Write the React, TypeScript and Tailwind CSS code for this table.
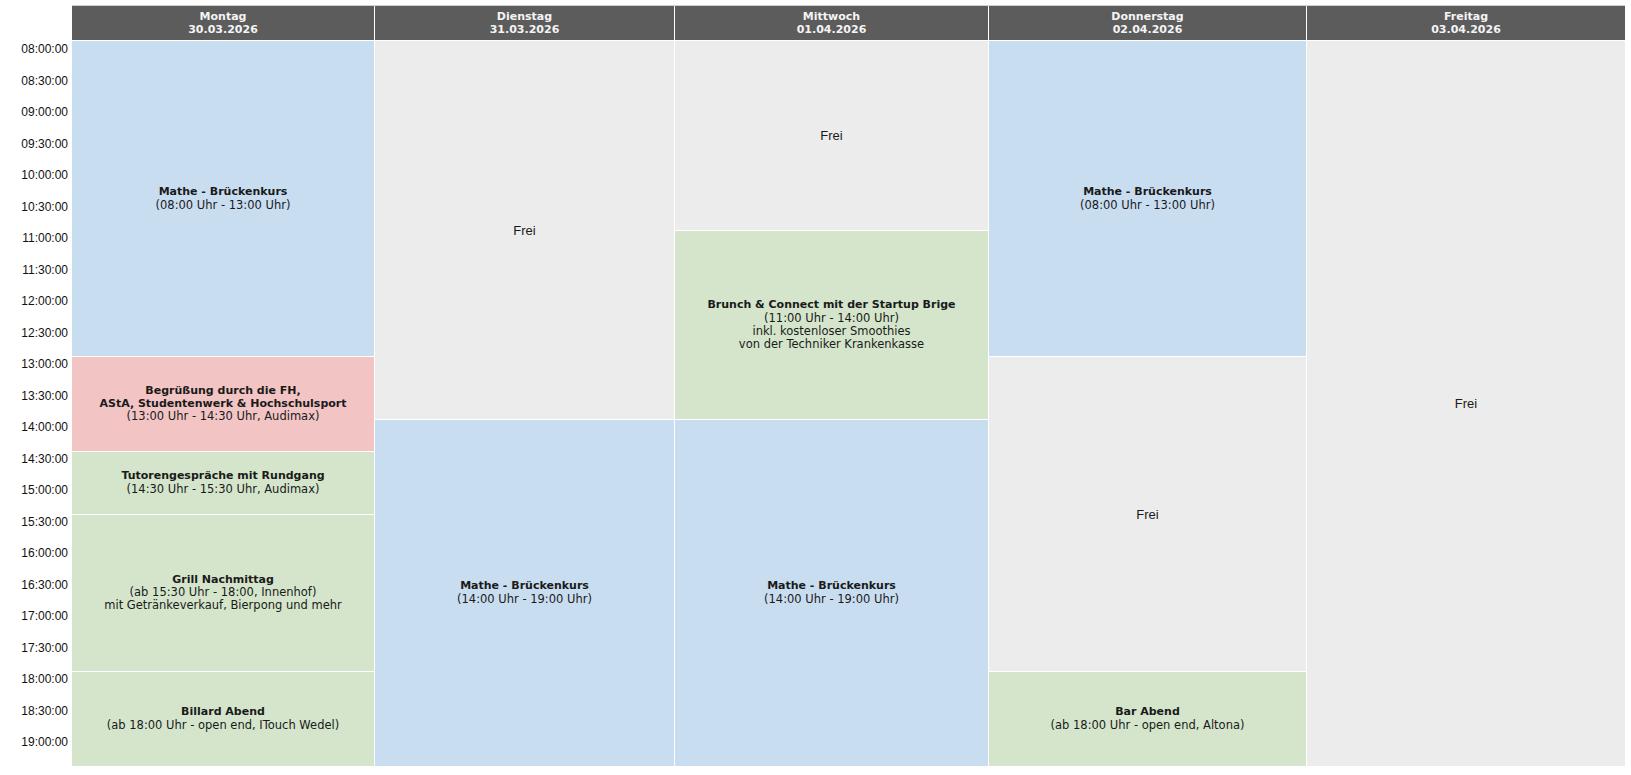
import React from "react";

type Ev = {
  h: string;
  bg: string;
  title?: string[];
  lines?: string[];
  frei?: boolean;
};

type Day = { name: string; date: string; w: string; events: Ev[] };

const BLUE = "bg-[#c9ddf1]";
const GRAY = "bg-[#ececec]";
const PINK = "bg-[#f2c4c4]";
const GREEN = "bg-[#d4e5cb]";

const days: Day[] = [
  {
    name: "Montag",
    date: "30.03.2026",
    w: "w-[302px]",
    events: [
      { h: "h-[315px]", bg: BLUE, title: ["Mathe - Brückenkurs"], lines: ["(08:00 Uhr - 13:00 Uhr)"] },
      {
        h: "h-[94.5px]",
        bg: PINK,
        title: ["Begrüßung durch die FH,", "AStA, Studentenwerk & Hochschulsport"],
        lines: ["(13:00 Uhr - 14:30 Uhr, Audimax)"],
      },
      { h: "h-[63px]", bg: GREEN, title: ["Tutorengespräche mit Rundgang"], lines: ["(14:30 Uhr - 15:30 Uhr, Audimax)"] },
      {
        h: "h-[157.5px]",
        bg: GREEN,
        title: ["Grill Nachmittag"],
        lines: ["(ab 15:30 Uhr - 18:00, Innenhof)", "mit Getränkeverkauf, Bierpong und mehr"],
      },
      { h: "h-[94.5px]", bg: GREEN, title: ["Billard Abend"], lines: ["(ab 18:00 Uhr - open end, ITouch Wedel)"] },
    ],
  },
  {
    name: "Dienstag",
    date: "31.03.2026",
    w: "w-[299px]",
    events: [
      { h: "h-[378px]", bg: GRAY, frei: true },
      { h: "h-[346.5px]", bg: BLUE, title: ["Mathe - Brückenkurs"], lines: ["(14:00 Uhr - 19:00 Uhr)"] },
    ],
  },
  {
    name: "Mittwoch",
    date: "01.04.2026",
    w: "w-[313px]",
    events: [
      { h: "h-[189px]", bg: GRAY, frei: true },
      {
        h: "h-[189px]",
        bg: GREEN,
        title: ["Brunch & Connect mit der Startup Brige"],
        lines: ["(11:00 Uhr - 14:00 Uhr)", "inkl. kostenloser Smoothies", "von der Techniker Krankenkasse"],
      },
      { h: "h-[346.5px]", bg: BLUE, title: ["Mathe - Brückenkurs"], lines: ["(14:00 Uhr - 19:00 Uhr)"] },
    ],
  },
  {
    name: "Donnerstag",
    date: "02.04.2026",
    w: "w-[317px]",
    events: [
      { h: "h-[315px]", bg: BLUE, title: ["Mathe - Brückenkurs"], lines: ["(08:00 Uhr - 13:00 Uhr)"] },
      { h: "h-[315px]", bg: GRAY, frei: true },
      { h: "h-[94.5px]", bg: GREEN, title: ["Bar Abend"], lines: ["(ab 18:00 Uhr - open end, Altona)"] },
    ],
  },
  {
    name: "Freitag",
    date: "03.04.2026",
    w: "w-[318px]",
    events: [{ h: "h-[724.5px]", bg: GRAY, frei: true }],
  },
];

const times: string[] = [];
for (let hh = 8; hh <= 19; hh++) {
  const s = String(hh).padStart(2, "0");
  times.push(`${s}:00:00`);
  if (hh < 19) times.push(`${s}:30:00`);
}

const EV_FONT = "font-['DejaVu_Sans',sans-serif]";

function Cell({ ev, first }: { ev: Ev; first: boolean }) {
  return (
    <div
      className={`${ev.h} ${ev.bg} ${first ? "" : "border-t border-white"} flex flex-col items-center justify-center text-center text-[#1a1a1a]`}
    >
      {ev.frei ? (
        <span className="font-['Liberation_Sans',Arial,sans-serif] text-[13px] leading-[15px]">Frei</span>
      ) : (
        <div className={`${EV_FONT} leading-[13.4px]`}>
          {ev.title?.map((t) => (
            <div key={t} className="font-bold text-[11px]">
              {t}
            </div>
          ))}
          {ev.lines?.map((t) => (
            <div key={t} className="text-[11.5px]">
              {t}
            </div>
          ))}
        </div>
      )}
    </div>
  );
}

export default function App() {
  return (
    <div className="bg-white w-[1631px] h-[775px] pt-[5px]">
      <div className="flex">
        <div className="w-[72px] shrink-0">
          <div className="h-[36px]" />
          {times.map((t) => (
            <div
              key={t}
              className="h-[31.5px] pr-[4px] pt-[1px] text-right font-['Liberation_Sans',Arial,sans-serif] text-[12px] leading-[14px] text-[#111]"
            >
              {t}
            </div>
          ))}
        </div>
        <div className="flex gap-px border-t border-[#cfcfcf]">
          {days.map((d) => (
            <div key={d.name} className={`${d.w} flex flex-col`}>
              <div
                className={`h-[35px] bg-[#5c5c5c] border-b border-white flex flex-col items-center justify-center text-[#f4f4f4] font-bold ${EV_FONT} text-[11px] leading-[13px]`}
              >
                <div>{d.name}</div>
                <div>{d.date}</div>
              </div>
              {d.events.map((ev, i) => (
                <Cell key={i} ev={ev} first={i === 0} />
              ))}
            </div>
          ))}
        </div>
      </div>
    </div>
  );
}
